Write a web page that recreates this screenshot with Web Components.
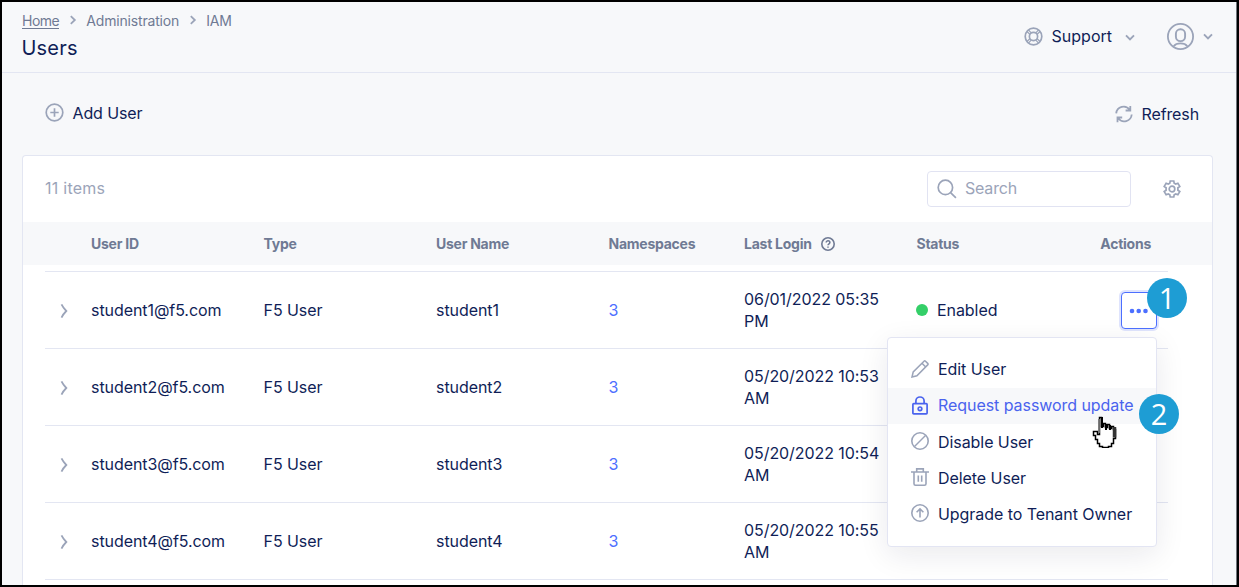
<!DOCTYPE html>
<html lang="en">
<head>
<meta charset="utf-8">
<title>Users</title>
<style>
html,body{margin:0;height:100%;overflow:hidden}
body{font-family:Inter,"Liberation Sans",sans-serif;font-size:16px;color:#0f1e57}
</style>
</head>
<body>
<users-page></users-page>
<script>
const def=(name,html)=>customElements.define(name,class extends HTMLElement{
  connectedCallback(){
    if(this.shadowRoot)return;
    const t=document.createElement('template');
    t.innerHTML=typeof html==='function'?html(this):html;
    this.attachShadow({mode:'open'}).append(t.content.cloneNode(true));
  }
});

const ICONS={
  right:[8,10,'<path d="M1.8 1.2 5.8 5 1.8 8.8" stroke-width="1.8"/>'],
  expand:[8,16,'<path d="M1.500 1.4Q3.300 5 6.300 8 3.300 11 1.500 14.6" stroke-width="1.8"/>'],
  down:[10,7,'<path d="M1 1.3 5 5.3 9 1.3" stroke-width="1.9"/>'],
  plus:[19,19,'<circle cx="9.5" cy="9.5" r="8.3"/><path d="M9.5 5.3v8.4M5.3 9.5h8.4"/>'],
  support:[19,19,'<circle cx="9.5" cy="9.5" r="8.3"/><circle cx="9.5" cy="9.5" r="4.1"/><path d="m4.4 2.9 2.8 3M2.9 4.5l3 2.8M14.6 2.9l-2.8 3M16.1 4.5l-3 2.8M4.4 16.1l2.8-3M2.9 14.5l3-2.8M14.6 16.1l-2.8-3M16.1 14.5l-3-2.8" stroke-width="1.2"/>'],
  user:[27,27,'<circle cx="13.5" cy="13.5" r="12.6" stroke-width="1.8"/><rect x="8.9" y="6.3" width="9.2" height="11.8" rx="4.4" stroke-width="1.9"/><path d="M6.7 23.2c1.5-2 4-2.8 6.8-2.8s5.300.8 6.800 2.800" stroke-width="1.8"/>'],
  refresh:[18,18,'<path d="M1.200 8.300A7.500 7.500 0 0 1 14.700 4.700M10.600 5.500h4.700V.9M16.700 9.500A7.500 7.500 0 0 1 3.200 13.300M7.200 12.500H2.500v4.800" stroke-width="1.800"/>'],
  search:[20,20,'<circle cx="8.400" cy="8.400" r="7.200"/><path d="m13.600 13.600 5.300 5.200"/>'],
  gear:[18,18,'<path d="M7.200 1h3.600l.4 2.300 1.500.8 2.200-.9 1.900 3.200-1.900 1.400v2.400l1.900 1.400-1.900 3.200-2.200-.9-1.500.8-.4 2.300H7.200l-.4-2.300-1.500-.8-2.200.9-1.900-3.200 1.900-1.400V7.800L1.200 6.400l1.900-3.200 2.200.9 1.500-.8z"/><circle cx="9" cy="9" r="2.800"/>'],
  help:[14,14,'<circle cx="7" cy="7" r="6.200" stroke-width="1.600"/><path d="M5.200 5.600c0-2.500 3.700-2.300 3.700-.1C8.900 6.800 7 6.800 7 8.300M7 9.500v1.300" stroke-width="1.500"/>'],
  pencil:[18,18,'<path d="m1 17 1.200-5L13 1.200c.5-.5 1-.5 1.500 0l2.200 2.200c.5.5.5 1 0 1.500L5.900 15.800zM11 3.300l3.700 3.700" stroke-width="1.500"/>'],
  lock:[18,19,'<rect x="1.900" y="7.600" width="14.200" height="10.300" rx=".8" stroke-width="1.700"/><path d="M4.900 7.500V5.100a4.100 4.100 0 0 1 8.200 0v2.400"/><circle cx="9" cy="12.800" r="1.800"/>'],
  ban:[18,18,'<circle cx="9" cy="9" r="8.200" stroke-width="1.600"/><path d="m3.500 14.500 11-11" stroke-width="1.500"/>'],
  trash:[18,18,'<path d="M0 4h18M5.700 3.800V.9h6.600v2.900M3 4.200v11.500c0 1 .5 1.500 1.500 1.500h9c1 0 1.500-.5 1.500-1.500V4.200M7.300 7.400v6.300M10.700 7.400v6.300" stroke-width="1.600"/>'],
  up:[18,18,'<circle cx="9" cy="9" r="8.200" stroke-width="1.600"/><path d="M9 13.500V5M5.600 8.200 9 4.900l3.400 3.300" stroke-width="1.600"/>'],
  dots:[20,6,'<g fill="currentColor" stroke="none"><circle cx="3" cy="3" r="2.300"/><circle cx="9.700" cy="3" r="2.300"/><circle cx="16.500" cy="3" r="2.300"/></g>'],
  hand:[28,33,'<path d="M9.500 2.500h2v9h2v-3h2v4h2v-3h2v4h2v-2h2v3h2v9h-2v5h-2v3h-3v1h-6v-1h-3v-3h-2v-4h-2v-4h-2v-4h4v3h2z" fill="#fff" stroke="#000" stroke-width="1.500"/><path d="M12 2v11M16 9v6M20 10v5" stroke="#000" stroke-width="2"/><path d="M24.500 12v10.500" stroke="#333" stroke-width="3.500"/><path d="M9 4v14" stroke="#777" stroke-width="1.800"/>']
};
def('ui-icon',el=>{const [w,h,p]=ICONS[el.getAttribute('name')];
  return `<style>:host{display:inline-flex;flex:none;color:#9ba4b9;width:${w}px;height:${h}px}svg{display:block}</style><svg width="${w}" height="${h}" viewBox="0 0 ${w} ${h}" fill="none" stroke="currentColor" stroke-width="1.700">${p}</svg>`});

def('page-header',`<style>
:host{display:flex;box-sizing:border-box;height:71px;padding:9px 24px 0 20px;border-bottom:1px solid #e3e6f2;justify-content:space-between}
nav{display:flex;align-items:center;font-size:14px;letter-spacing:-.17px;line-height:20px;color:#6f7a94}
nav a{line-height:15px;border-bottom:1px solid #6f7a94;letter-spacing:-.5px}
nav ui-icon{margin:0 9px 2px 10px}
h1{font-weight:400;font-size:20px;line-height:24px;margin:5px 0 0 -.5px;letter-spacing:.2px}
.r{display:flex;height:50px;align-items:center}
.s{margin:0 13px 0 9px}
</style><div><nav><a>Home</a><ui-icon name="right"></ui-icon><span>Administration</span><ui-icon name="right"></ui-icon><span>IAM</span></nav><h1>Users</h1></div>
<div class="r"><ui-icon name="support"></ui-icon><span class="s">Support</span><ui-icon name="down" style="margin-top:3px"></ui-icon><ui-icon name="user" style="margin:0 9px 0 32px"></ui-icon><ui-icon name="down"></ui-icon></div>`);

def('page-actions',`<style>
:host{display:flex;height:82px;box-sizing:border-box;padding:0 38px 2px 43px;justify-content:space-between;align-items:center}
div{display:flex;align-items:center;gap:9px;letter-spacing:-.12px}
</style><div style="gap:8.500px"><ui-icon name="plus" style="margin-bottom:2px"></ui-icon><span>Add User</span></div><div style="margin-top:2px"><ui-icon name="refresh"></ui-icon><span>Refresh</span></div>`);

def('table-toolbar',`<style>
:host{display:flex;height:66px;align-items:center;padding:0 31px 0 22px;color:#9ba4b9}
.b{box-sizing:border-box;width:204px;height:36px;border:1px solid #e1e3f2;border-radius:4px;margin:0 32px 0 auto;display:flex;align-items:center;gap:8px;padding:0 9px}
.n{letter-spacing:.25px;margin-bottom:2px}.q{margin-bottom:2px;letter-spacing:-.2px}
</style><span class="n">11 items</span><div class="b"><ui-icon name="search"></ui-icon><span class="q">Search</span></div><ui-icon name="gear"></ui-icon>`);

const COLS='grid-template-columns:46px 172.500px 172.500px 172.500px 135.500px 172.500px 120px 1fr';
def('table-head',`<style>
:host{display:grid;${COLS};height:43px;align-items:center;padding:0 61px 0 22px;background:#f7f8fa;color:#6f7a94;font-weight:700;font-size:14px;letter-spacing:-.25px}
.l{display:flex;align-items:center;gap:9.500px}.l ui-icon{color:#6f7a94}.a{text-align:right}
</style><i></i><span>User ID</span><span>Type</span><span>User Name</span><span>Namespaces</span><span class="l">Last Login<ui-icon name="help"></ui-icon></span><span>Status</span><span class="a">Actions</span>`);

def('user-row',el=>{const n=el.getAttribute('user'),open=el.hasAttribute('open');
return `<style>
:host{display:grid;${COLS};height:76px;align-items:center;border-top:1px solid #e3e6f2;margin:0 44px 0 22px;padding-right:10px;line-height:22px;letter-spacing:-.07px}
.n{color:#4c6fff}.e{margin-left:15px;margin-top:1px}
.st{display:flex;align-items:center;gap:9px;margin-left:-.5px}.dot{width:12px;height:12px;border-radius:50%;background:#34cf68}
button{font:inherit;justify-self:end;box-sizing:border-box;width:36px;height:37px;border:1px solid #4c6fff;border-radius:4px;background:#fff;box-shadow:0 0 0 2px #dfe4fd;padding:0;display:flex;align-items:center;justify-content:center;margin-right:1px}
button ui-icon{color:#4c6fff;margin-top:1px}
</style><ui-icon class="e" name="expand"></ui-icon><span>${n}@f5.com</span><span>F5 User</span><span>${n}</span><span class="n">3</span><span>${el.getAttribute('date')}<br>${el.getAttribute('half')}</span>${open?'<span class="st"><i class="dot"></i>Enabled</span><button><ui-icon name="dots"></ui-icon></button>':''}`});

def('menu-item',el=>`<style>
:host{display:flex;align-items:center;height:36.200px;padding-left:23px;gap:9px;letter-spacing:-.06px}
ui-icon{margin-bottom:3px}span{margin-bottom:1.500px}
:host([active]){background:#f7f8fa;color:#4a63ee}
:host([active]) ui-icon{color:#4a63ee;margin-bottom:2px}
:host([active]) span{margin-bottom:3px}
</style><ui-icon name="${el.getAttribute('icon')}"></ui-icon><span><slot></slot></span>`);

def('action-menu',`<style>
:host{display:block;box-sizing:border-box;width:270px;height:210px;padding:14px 0;background:#fff;border:1px solid #e3e5f3;border-radius:4px;box-shadow:0 8px 30px rgba(20,25,60,.09)}
</style><slot></slot>`);

def('step-badge',`<style>
:host{display:flex;width:40px;height:40px;border-radius:50%;background:#1e9dd4;color:#fff;align-items:center;justify-content:center;font:29px/40px "Open Sans",sans-serif}
</style><slot></slot>`);

def('users-page',`<style>
:host{display:flex;flex-direction:column;box-sizing:border-box;position:relative;width:1239px;height:587px;overflow:hidden;background:#f7f8fa;border:2px solid #000}
.card{flex:1;margin:0 24px 0 20px;background:#fff;border:1px solid #e3e6f2;border-bottom:0;border-radius:4px 4px 0 0;box-sizing:border-box;overflow:hidden}
.rows{padding-top:6px}
.end{height:1px;background:#e3e6f2;margin:0 44px 0 22px}
.edge{position:absolute;right:0;top:0;width:1px;height:583px;background:#70757c}
action-menu{position:absolute;left:885px;top:335px}
step-badge,.cur{position:absolute}
</style>
<page-header></page-header><page-actions></page-actions>
<div class="card"><table-toolbar></table-toolbar><table-head></table-head><div class="rows">
<user-row user="student1" date="06/01/2022 05:35" half="PM" open></user-row>
<user-row user="student2" date="05/20/2022 10:53" half="AM"></user-row>
<user-row user="student3" date="05/20/2022 10:54" half="AM"></user-row>
<user-row user="student4" date="05/20/2022 10:55" half="AM"></user-row>
<div class="end"></div></div></div>
<action-menu><menu-item icon="pencil">Edit User</menu-item><menu-item icon="lock" active>Request password update</menu-item><menu-item icon="ban">Disable User</menu-item><menu-item icon="trash">Delete User</menu-item><menu-item icon="up">Upgrade to Tenant Owner</menu-item></action-menu>
<step-badge style="left:1145px;top:276px">1</step-badge>
<step-badge style="left:1137px;top:392px">2</step-badge>
<ui-icon class="cur" name="hand" style="left:1088px;top:413px"></ui-icon>
<div class="edge"></div>`);
</script>
</body>
</html>
